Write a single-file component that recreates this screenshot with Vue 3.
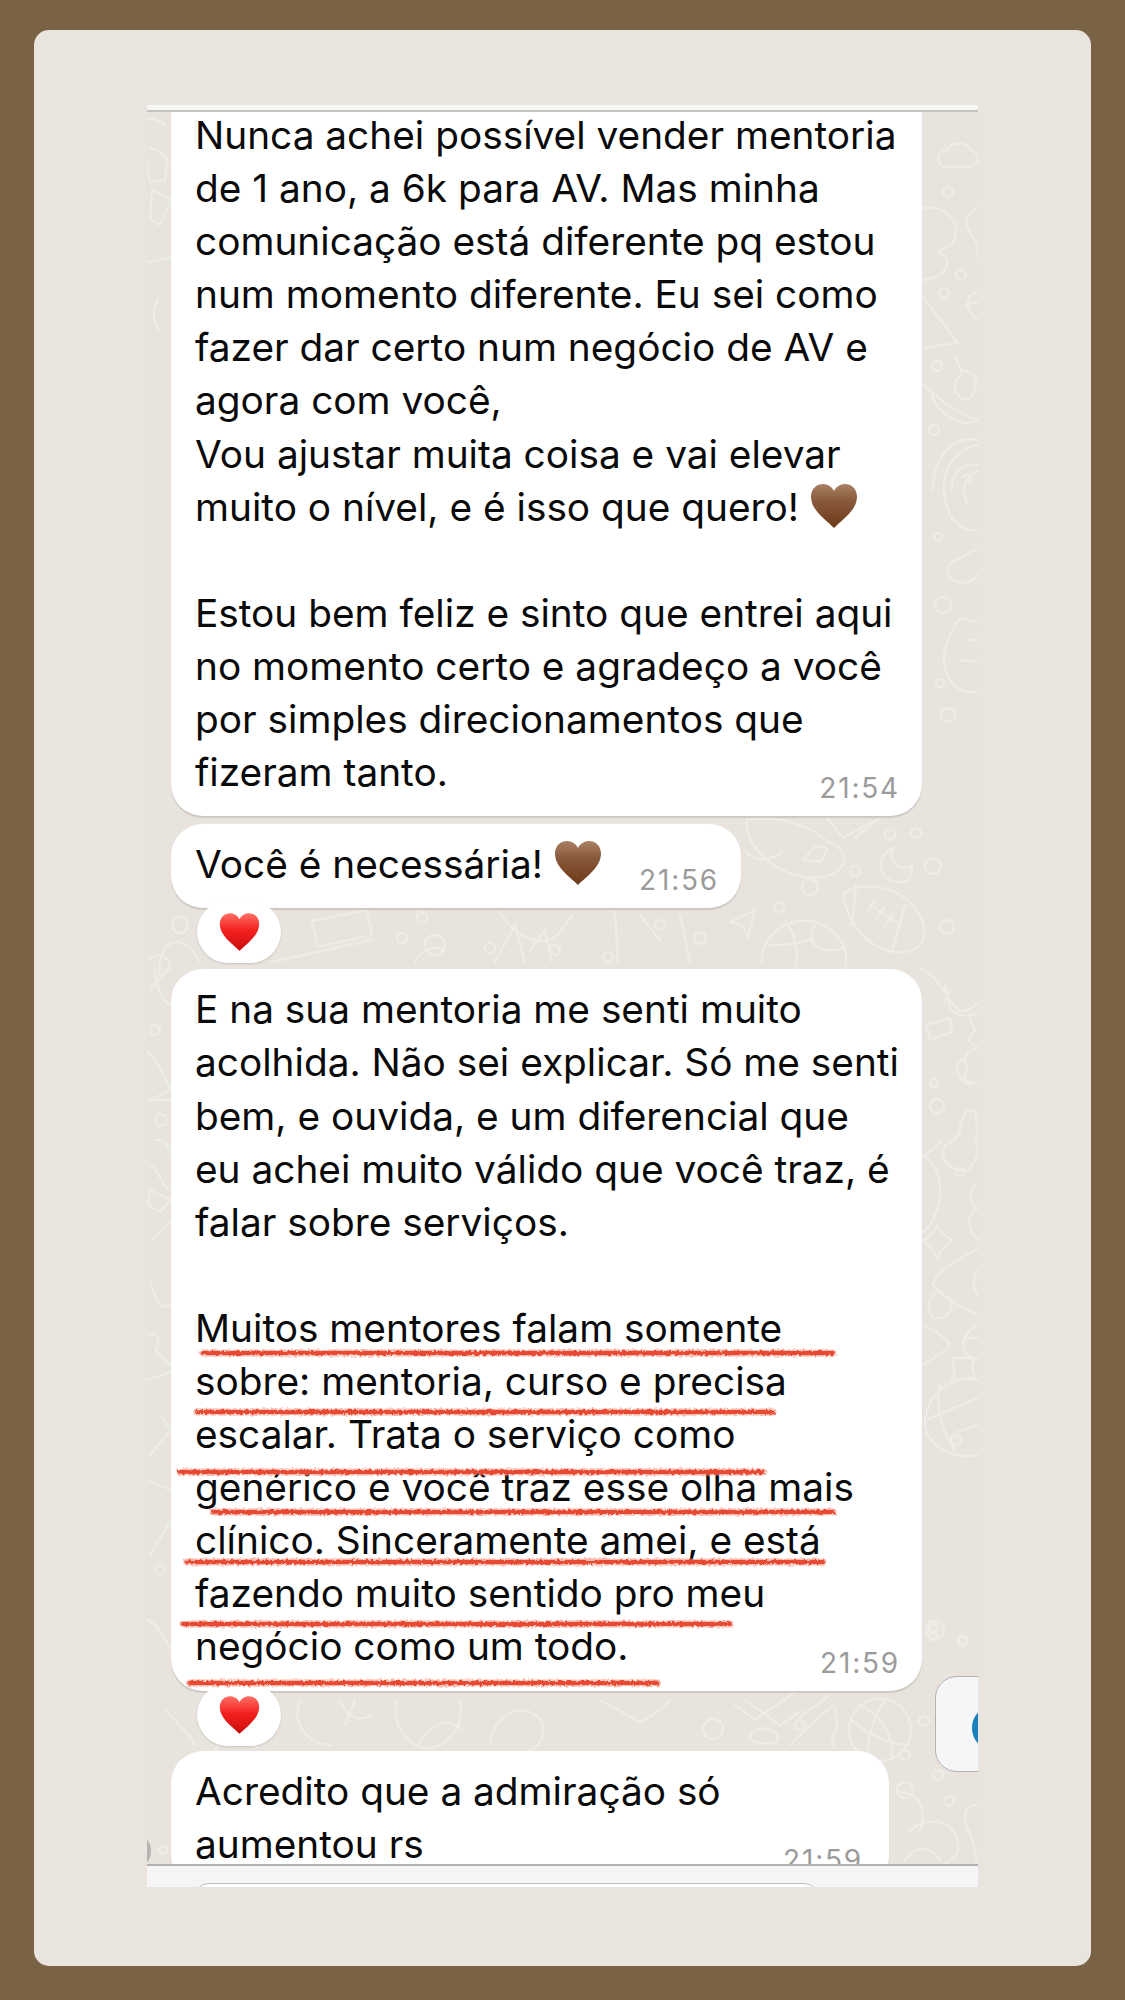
<script setup>
// wallpaper doodles and marker strokes are drawn in page coordinates
const circles = [
  [890, 835, 5], [916, 833, 5], [933, 866, 8], [855, 871, 5], [810, 887, 8], [779, 907, 5], [947, 927, 7],
  [948, 192, 5], [961, 275, 5], [944, 293, 5], [937, 366, 5], [934, 430, 5], [938, 537, 4], [943, 605, 8],
  [940, 683, 4], [948, 715, 7], [934, 1083, 4], [937, 1106, 7], [960, 1172, 4], [956, 1440, 5],
  [422, 917, 5], [402, 938, 5], [435, 945, 10], [490, 948, 5], [555, 950, 5], [608, 957, 5], [155, 1030, 5],
  [161, 1120, 6], [160, 1570, 5], [933, 1636, 4], [963, 1640, 4], [935, 1630, 9], [932, 1627, 5],
  [933, 1629, 4], [963, 1641, 5], [713, 1729, 10], [800, 1725, 5], [924, 1721, 5], [905, 1755, 5],
  [938, 1775, 5], [949, 1801, 5], [905, 1790, 8], [163, 1850, 4], [700, 938, 6], [660, 925, 5], [180, 925, 8]
]

const doodles = [
  // cup and bunny by the second bubble
  'M747 820C742 850 790 888 830 875C850 868 848 848 828 842C808 822 770 815 747 820',
  'M803 860L815 847C825 845 828 848 826 852L820 862Z',
  'M745 850C752 862 770 862 782 852',
  'M827 818L843 838L880 818M855 838L880 818',
  // moon
  'M893 848C872 860 880 882 900 882C912 882 912 872 912 866C900 872 888 862 893 848Z',
  // football
  'M843 894C860 880 900 885 918 912C930 930 925 950 905 952C880 955 850 935 843 894Z',
  'M856 885L852 925M905 905L893 948M870 905L900 925M875 900L868 912M884 908L876 920M892 914L885 926',
  // triangle and life ring
  'M730 922L755 910L748 937L742 925Z',
  'M762 962C760 935 790 915 815 922C840 930 850 950 845 968',
  'M785 920C795 935 800 950 795 968M815 925C805 945 820 955 845 948M765 945C780 945 795 945 810 940',
  // right strip, top
  'M945 167C935 165 936 150 948 150C952 140 968 142 970 150C980 150 980 167 968 167Z',
  'M978 207C962 215 965 228 975 240C978 245 977 252 978 258',
  'M923 208C950 205 962 225 953 243C945 250 936 250 940 252C955 262 945 278 923 280',
  'M923 297L958 343L923 348',
  'M978 293C965 293 963 310 978 320M966 305L978 302',
  'M955 356C960 368 965 372 958 378C950 385 958 398 965 400C972 398 978 390 975 376C970 372 968 372 962 370',
  'M923 385C935 395 950 410 978 420C960 430 935 410 932 395',
  'M978 440C950 435 933 460 933 490M978 465C962 462 950 475 952 490M962 478C968 470 972 478 970 483',
  'M978 445C950 450 935 480 950 515C958 528 970 532 980 530M985 470C965 470 960 490 968 505',
  'M978 549C965 553 958 562 955 560C945 565 945 578 958 582C968 585 978 578 980 570',
  'M978 622L960 618C945 640 938 660 950 680C958 692 970 695 980 690M968 640L978 640M960 660L978 662',
  // right strip, middle
  'M920 968C938 975 948 1000 958 1010C965 1015 975 1005 978 1003',
  'M945 985L950 1008C960 1020 975 1015 980 1012M950 990L944 1002',
  'M926 1025L950 1018L952 1032L930 1040Z',
  'M970 1020L975 1030L968 1040L978 1048C965 1050 962 1060 968 1070C958 1080 970 1085 978 1082',
  'M963 1060C950 1065 960 1085 972 1085',
  'M965 1112L975 1110L978 1135L975 1140C982 1150 975 1165 965 1172C950 1170 938 1160 945 1145C955 1140 962 1135 960 1125Z',
  'M925 1155L942 1142M923 1155C940 1165 945 1190 935 1215C930 1228 925 1230 923 1232',
  'M975 1185C968 1195 970 1205 978 1208C965 1215 968 1230 978 1240',
  'M937 1225C942 1235 948 1238 952 1240C945 1245 942 1250 937 1258C934 1250 930 1246 922 1240C930 1238 934 1232 937 1225Z',
  'M978 1248C955 1262 935 1272 933 1285C945 1300 965 1308 978 1315',
  'M936 1292C928 1300 925 1310 934 1318C945 1320 955 1312 950 1298M978 1270C970 1278 975 1292 978 1296',
  'M923 1325C935 1330 948 1340 950 1345C942 1355 930 1360 923 1365',
  'M978 1325C965 1330 960 1345 965 1352C970 1358 975 1358 978 1360M965 1338L978 1338',
  'M952 1358L975 1358L972 1365C972 1372 975 1375 975 1378L952 1380C955 1372 955 1365 952 1358Z',
  'M978 1380C950 1375 925 1395 925 1425C928 1445 950 1460 978 1455',
  'M940 1385C935 1400 940 1430 955 1450M925 1420C945 1412 960 1405 978 1398M958 1432L978 1425',
  // left strip
  'M165 125C155 118 150 118 147 120M150 148C160 150 165 155 168 160L165 180L150 182L147 165',
  'M152 190L171 200L160 225L150 220Z',
  'M147 262L171 258M158 300C152 310 152 320 160 330',
  'M148 960C158 952 170 955 170 968C160 975 155 985 150 990M155 970C157 985 160 1000 170 1005',
  'M147 1050C155 1060 160 1065 171 1090M171 1090L150 1100',
  'M147 1100L171 1100M155 1140C165 1138 170 1148 171 1155M150 1165C160 1170 160 1185 170 1190',
  'M150 1190L171 1200L160 1212L148 1205Z',
  'M152 1240L171 1220M150 1280C155 1300 160 1310 171 1305M150 1335C160 1330 160 1345 155 1350L171 1365',
  'M147 1380L171 1372M160 1415L171 1430L150 1455M147 1480L171 1490M150 1555L171 1520',
  'M147 1620C155 1620 165 1640 171 1650',
  // gap under bubble two
  'M312 921L367 910L372 935L318 947Z',
  'M272 962L371 940',
  'M200 962C180 925 155 945 160 975',
  'M500 912C510 930 530 945 550 940C560 935 565 925 572 915',
  'M495 962L515 925L525 962M530 950L545 930L552 962',
  'M615 912L618 962M640 915L660 940M680 915L690 962',
  'M415 962C420 950 435 945 445 950',
  // gap under bubble three
  'M300 1700C290 1725 310 1745 330 1745M340 1700C345 1712 355 1725 372 1715M355 1700L345 1725',
  'M397 1700C390 1725 410 1750 430 1748C450 1745 465 1725 460 1700M418 1745C430 1725 448 1715 462 1730',
  'M490 1745C490 1725 510 1705 530 1712C550 1720 545 1745 530 1750',
  'M215 1750C220 1735 240 1735 258 1748M165 1710C180 1725 190 1735 195 1745',
  'M600 1700L640 1722C650 1718 660 1710 670 1700M745 1700L780 1725L800 1712',
  // gap by the last bubble and forward button
  'M735 1705L755 1720L795 1692M830 1695L800 1717',
  'M750 1740C748 1725 775 1725 778 1738C778 1745 760 1745 750 1740Z',
  'M790 1745C810 1725 825 1712 830 1708C835 1700 838 1718 836 1730C830 1740 832 1745 835 1748',
  'M900 1792C925 1795 925 1815 920 1830M910 1830C930 1815 955 1820 958 1845C960 1855 950 1860 945 1864M905 1860C915 1845 930 1845 940 1860',
  'M977 1805C965 1805 962 1815 968 1830C975 1840 975 1855 977 1862'
]

const balls = [[880, 1730, 31]]

const strokes = [
  [203, 1353, 833], [197, 1412, 773], [180, 1472, 763], [213, 1512, 833],
  [187, 1562, 823], [183, 1624, 730], [190, 1683, 657]
]

const heartPath = 'M24 45C15 36 1 27 1 13.5C1 5.5 7 1 13 1C18 1 22 4 24 8C26 4 30 1 35 1C41 1 47 5.5 47 13.5C47 27 33 36 24 45Z'
</script>

<template>
  <div class="page">
    <div class="card">
      <div class="shot">
        <div class="topbar"></div>
        <div class="chat">
          <svg class="wallpaper" viewBox="147 112 831 1752" fill="none" stroke="#efebe6" stroke-width="2.4" stroke-linecap="round" stroke-linejoin="round">
            <path v-for="(d, i) in doodles" :key="i" :d="d" />
            <circle v-for="(c, i) in circles" :key="'c' + i" :cx="c[0]" :cy="c[1]" :r="c[2]" />
            <g v-for="(b, i) in balls" :key="'b' + i">
              <circle :cx="b[0]" :cy="b[1]" :r="b[2]" />
              <path d="M851 1720C870 1735 890 1745 908 1745M860 1705C880 1715 895 1735 892 1760M885 1700C875 1715 865 1740 868 1758" />
            </g>
          </svg>

          <div class="avatar"></div>

          <div class="messages">
            <div class="bubble first">
              Nunca achei possível vender mentoria<br>
              de 1 ano, a 6k para AV. Mas minha<br>
              comunicação está diferente pq estou<br>
              num momento diferente. Eu sei como<br>
              fazer dar certo num negócio de AV e<br>
              agora com você,<br>
              Vou ajustar muita coisa e vai elevar<br>
              muito o nível, e é isso que quero!
              <svg class="heart" viewBox="0 0 48 46"><path :d="heartPath" fill="url(#brownHeart)" /></svg><br>
              <br>
              Estou bem feliz e sinto que entrei aqui<br>
              no momento certo e agradeço a você<br>
              por simples direcionamentos que<br>
              fizeram tanto.
              <span class="time">21:54</span>
            </div>

            <div class="bubble short">
              Você é necessária!
              <svg class="heart" viewBox="0 0 48 46"><path :d="heartPath" fill="url(#brownHeart)" /></svg>
              <span class="time">21:56</span>
            </div>
            <div class="reaction">
              <svg class="red-heart" viewBox="0 0 48 46"><path :d="heartPath" fill="url(#redHeart)" /></svg>
            </div>

            <div class="bubble">
              E na sua mentoria me senti muito<br>
              acolhida. Não sei explicar. Só me senti<br>
              bem, e ouvida, e um diferencial que<br>
              eu achei muito válido que você traz, é<br>
              falar sobre serviços.<br>
              <br>
              Muitos mentores falam somente<br>
              sobre: mentoria, curso e precisa<br>
              escalar. Trata o serviço como<br>
              genérico e você traz esse olha mais<br>
              clínico. Sinceramente amei, e está<br>
              fazendo muito sentido pro meu<br>
              negócio como um todo.
              <span class="time">21:59</span>
            </div>
            <div class="reaction">
              <svg class="red-heart" viewBox="0 0 48 46"><path :d="heartPath" fill="url(#redHeart)" /></svg>
            </div>

            <div class="bubble last">
              Acredito que a admiração só<br>
              aumentou rs
              <span class="time">21:59</span>
            </div>
          </div>

          <div class="forward"><span class="forward-ring"></span></div>

          <svg class="marks" viewBox="147 112 831 1752" fill="none">
            <defs>
              <linearGradient id="brownHeart" x1="0" y1="0" x2="0" y2="1">
                <stop offset="0" stop-color="#ab8163" />
                <stop offset="0.4" stop-color="#87583a" />
                <stop offset="1" stop-color="#6c3a17" />
              </linearGradient>
              <linearGradient id="redHeart" x1="0" y1="0" x2="0" y2="1">
                <stop offset="0" stop-color="#ff6f66" />
                <stop offset="0.45" stop-color="#f4211f" />
                <stop offset="1" stop-color="#c90d0d" />
              </linearGradient>
              <filter id="rough" x="-2%" y="-300%" width="104%" height="700%">
                <feTurbulence type="fractalNoise" baseFrequency="0.35" numOctaves="2" seed="4" />
                <feDisplacementMap in="SourceGraphic" scale="4" />
              </filter>
            </defs>
            <g filter="url(#rough)" stroke-linecap="round">
              <line v-for="(s, i) in strokes" :key="i" :x1="s[0]" :y1="s[1]" :x2="s[2]" :y2="s[1]" stroke="#f0836f" stroke-width="7" opacity="0.6" />
              <line v-for="(s, i) in strokes" :key="'r' + i" :x1="s[0]" :y1="s[1]" :x2="s[2]" :y2="s[1]" stroke="#e84a33" stroke-width="4" />
            </g>
          </svg>
        </div>
        <div class="footer"><div class="input"></div></div>
      </div>
    </div>
  </div>
</template>

<style scoped>
.page {
  width: 1125px;
  height: 2000px;
  box-sizing: border-box;
  padding: 30px 34px 34px;
  background: #7a6344;
  display: flex;
}

.card {
  flex: 1;
  background: #eae4de;
  border-radius: 15px;
  display: flex;
  flex-direction: column;
  align-items: center;
  padding-top: 75px;
}

.shot {
  width: 831px;
  height: 1782px;
  display: flex;
  flex-direction: column;
}

.topbar {
  height: 5px;
  flex: none;
  background: #f6f6f5;
  border-bottom: 2px solid #c3c3c1;
}

.chat {
  flex: 1;
  position: relative;
  overflow: hidden;
  background: #e8e3dc;
}

.wallpaper,
.marks {
  position: absolute;
  left: 0;
  top: 0;
  width: 831px;
  height: 1752px;
  pointer-events: none;
}

.avatar {
  position: absolute;
  left: -12px;
  bottom: 0;
  width: 16px;
  height: 26px;
  border-radius: 50%;
  background: #b5b4b1;
}

.messages {
  position: relative;
  display: flex;
  flex-direction: column;
  align-items: flex-start;
  gap: 8px;
  padding-left: 24px;
  margin-top: -17px;
}

.bubble {
  position: relative;
  width: 751px;
  box-sizing: border-box;
  padding: 13px 24px 18px;
  background: #fff;
  border-radius: 32px;
  box-shadow: 0 2px 1px rgba(0, 0, 0, 0.12);
  font-family: Inter, "Liberation Sans", sans-serif;
  font-size: 38.8px;
  line-height: 53.1px;
  color: #0a0a0a;
  white-space: nowrap;
}

.first {
  border-radius: 0 0 32px 32px;
}

.short {
  width: 570px;
}

.last {
  width: 718px;
  margin-top: -1px;
}

.time {
  position: absolute;
  right: 22px;
  bottom: 13px;
  font-size: 28px;
  line-height: 30px;
  color: #9b9b9b;
  letter-spacing: 1.8px;
}

.last .time {
  right: 26px;
}

.heart {
  width: 48px;
  height: 46px;
  vertical-align: -8px;
}

.reaction {
  position: relative;
  width: 84px;
  height: 62px;
  margin: -15px 0 -2px 26px;
  display: flex;
  align-items: center;
  justify-content: center;
  background: #fff;
  border-radius: 31px;
  box-shadow: 0 1px 2px rgba(0, 0, 0, 0.14);
}

.red-heart {
  width: 41px;
  height: 40px;
}

.forward {
  position: absolute;
  left: 788px;
  top: 1564px;
  width: 70px;
  height: 96px;
  box-sizing: border-box;
  background: #f5f6f7;
  border: 1.5px solid #b3b3b3;
  border-radius: 22px;
}

.forward-ring {
  position: absolute;
  left: 36px;
  top: 28px;
  width: 34px;
  height: 34px;
  border: 6px solid #1a7fbf;
  border-radius: 50%;
}

.footer {
  height: 23px;
  flex: none;
  box-sizing: border-box;
  border-top: 2px solid #b2b2b2;
  background: #f5f5f5;
  padding: 17px 158px 0 46px;
  overflow: hidden;
}

.input {
  height: 30px;
  background: #fff;
  border: 1.5px solid #bdbdbd;
  border-radius: 30px;
}
</style>

<style>
body {
  background: #7a6344;
}
</style>
